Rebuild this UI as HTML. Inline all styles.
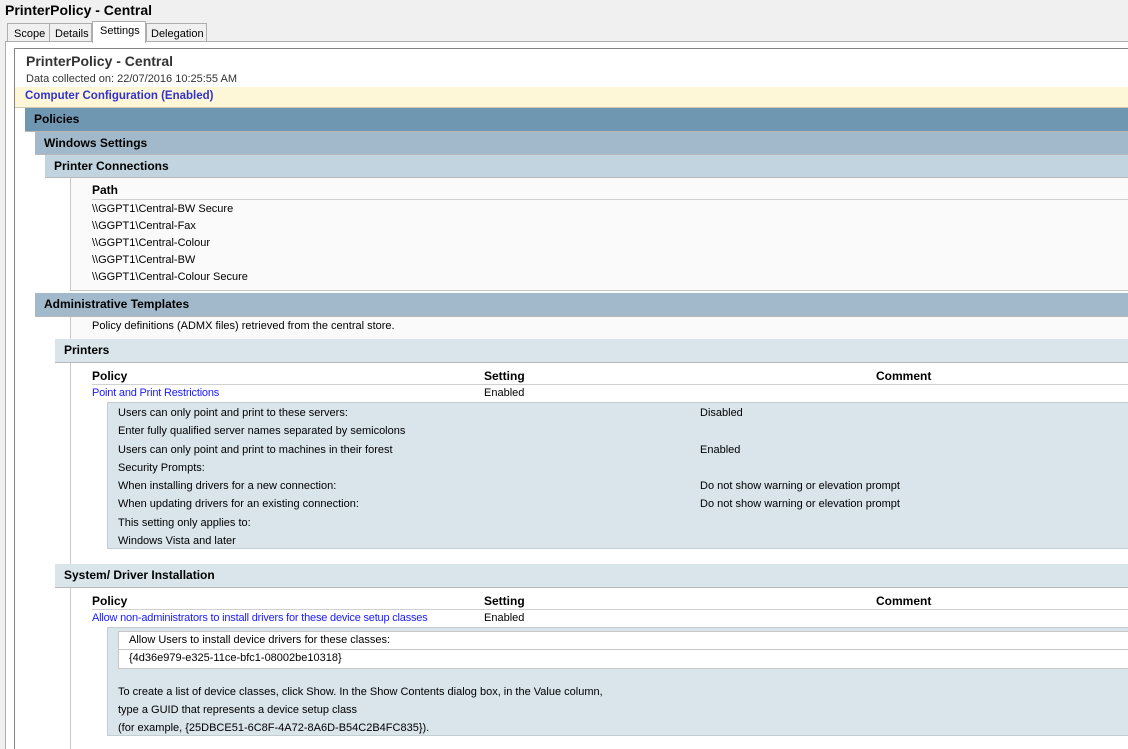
<!DOCTYPE html>
<html><head><style>
*{margin:0;padding:0;box-sizing:border-box}
body{width:1128px;height:749px;overflow:hidden;background:#f0f0f0;font-family:"Liberation Sans",Arial,sans-serif;font-size:11px;color:#000;position:relative}
.a{position:absolute;white-space:nowrap}
.b{font-weight:bold}
.band{position:absolute;right:0;font-weight:bold;font-size:12px;padding-left:9px;line-height:22px;border-bottom:1px solid #b8b8b8}
.lnk{color:#1a1aff;letter-spacing:-0.2px}
</style></head><body>
<div class="a b" style="left:5px;top:1px;font-size:14px;line-height:18px">PrinterPolicy - Central</div>
<div class="a" style="left:7px;top:23px;width:43px;height:19px;border:1px solid #adadad;border-bottom:none;background:#f0f0f0;padding:4px 0 0 6px;font-size:11px">Scope</div>
<div class="a" style="left:50px;top:23px;width:42px;height:19px;border:1px solid #adadad;border-bottom:none;border-left:none;background:#f0f0f0;padding:4px 0 0 5px">Details</div>
<div class="a" style="left:146px;top:23px;width:61px;height:19px;border:1px solid #adadad;border-bottom:none;background:#f0f0f0;padding:4px 0 0 4px">Delegation</div>
<div class="a" style="left:5px;top:41px;width:1123px;height:708px;border:1px solid #adadad;border-right:none;border-bottom:none;background:#fff"></div>
<div class="a" style="left:92px;top:21px;width:54px;height:22px;border:1px solid #adadad;border-bottom:none;background:#fff;padding:3px 0 0 7px">Settings</div>
<div class="a" style="left:14px;top:48px;width:1114px;height:701px;border-left:1px solid #828282;border-top:1px solid #828282;background:#fff"></div>
<div class="a b" style="left:26px;top:53px;font-size:14px;color:#333">PrinterPolicy - Central</div>
<div class="a" style="left:26px;top:73px;color:#333">Data collected on: 22/07/2016 10:25:55 AM</div>
<div class="a b" style="left:15px;right:0;top:87px;height:21px;background:#fdf6d7;color:#3333cc;font-size:11.5px;padding:3px 0 0 10px;border-bottom:1px solid #d0c8b0">Computer Configuration (Enabled)</div>
<div class="band" style="left:25px;top:108px;height:24px;background:#7097b2">Policies</div>
<div class="band" style="left:35px;top:132px;height:23px;background:#a1b9cb">Windows Settings</div>
<div class="band" style="left:45px;top:155px;height:23px;background:#c2d4df">Printer Connections</div>
<div class="a" style="left:70px;right:0;top:178px;height:113px;background:#fafafa;border-left:1px solid #c8c8c8;border-bottom:1px solid #c8c8c8"></div>
<div class="a b" style="left:92px;top:183px;font-size:12px">Path</div>
<div class="a" style="left:92px;right:0;top:199px;border-top:1px solid #d0d0d0"></div>
<div class="a" style="left:92px;top:201px;line-height:17px">\\GGPT1\Central-BW Secure<br>\\GGPT1\Central-Fax<br>\\GGPT1\Central-Colour<br>\\GGPT1\Central-BW<br>\\GGPT1\Central-Colour Secure</div>
<div class="band" style="left:35px;top:293px;height:24px;background:#a1b9cb">Administrative Templates</div>
<div class="a" style="left:70px;top:317px;height:432px;border-left:1px solid #c8c8c8;width:1px"></div>
<div class="a" style="left:71px;right:0;top:317px;height:22px;background:#fafafa"></div>
<div class="a" style="left:92px;top:320px">Policy definitions (ADMX files) retrieved from the central store.</div>
<div class="band" style="left:55px;top:339px;height:24px;background:#d9e4eb">Printers</div>
<div class="a b" style="left:92px;top:369px;font-size:12px">Policy</div>
<div class="a b" style="left:484px;top:369px;font-size:12px">Setting</div>
<div class="a b" style="left:876px;top:369px;font-size:12px">Comment</div>
<div class="a" style="left:92px;right:0;top:384px;border-top:1px solid #d0d0d0"></div>
<div class="a lnk" style="left:92px;top:387px">Point and Print Restrictions</div>
<div class="a" style="left:484px;top:387px">Enabled</div>
<div class="a" style="left:107px;right:0;top:402px;height:147px;background:#d9e4eb;border:1px solid #c4cdd4;border-right:none"></div>
<div class="a" style="left:118px;top:404px;line-height:18.3px">Users can only point and print to these servers:<br>Enter fully qualified server names separated by semicolons<br>Users can only point and print to machines in their forest<br>Security Prompts:<br>When installing drivers for a new connection:<br>When updating drivers for an existing connection:<br>This setting only applies to:<br>Windows Vista and later</div>
<div class="a" style="left:700px;top:404px;line-height:18.3px">Disabled<br><br>Enabled<br><br>Do not show warning or elevation prompt<br>Do not show warning or elevation prompt</div>
<div class="band" style="left:55px;top:564px;height:24px;background:#d9e4eb">System/ Driver Installation</div>
<div class="a b" style="left:92px;top:594px;font-size:12px">Policy</div>
<div class="a b" style="left:484px;top:594px;font-size:12px">Setting</div>
<div class="a b" style="left:876px;top:594px;font-size:12px">Comment</div>
<div class="a" style="left:92px;right:0;top:609px;border-top:1px solid #d0d0d0"></div>
<div class="a lnk" style="left:92px;top:612px">Allow non-administrators to install drivers for these device setup classes</div>
<div class="a" style="left:484px;top:612px">Enabled</div>
<div class="a" style="left:107px;right:0;top:627px;height:109px;background:#d9e4eb;border:1px solid #c4cdd4;border-right:none"></div>
<div class="a" style="left:118px;right:0;top:631px;height:38px;background:#fff;border:1px solid #c8c8c8;border-right:none"></div>
<div class="a" style="left:118px;right:0;top:649px;border-top:1px solid #c8c8c8"></div>
<div class="a" style="left:129px;top:634px">Allow Users to install device drivers for these classes:</div>
<div class="a" style="left:129px;top:652px">{4d36e979-e325-11ce-bfc1-08002be10318}</div>
<div class="a" style="left:118px;top:683px;line-height:18px">To create a list of device classes, click Show. In the Show Contents dialog box, in the Value column,<br>type a GUID that represents a device setup class<br>(for example, {25DBCE51-6C8F-4A72-8A6D-B54C2B4FC835}).</div>
</body></html>
